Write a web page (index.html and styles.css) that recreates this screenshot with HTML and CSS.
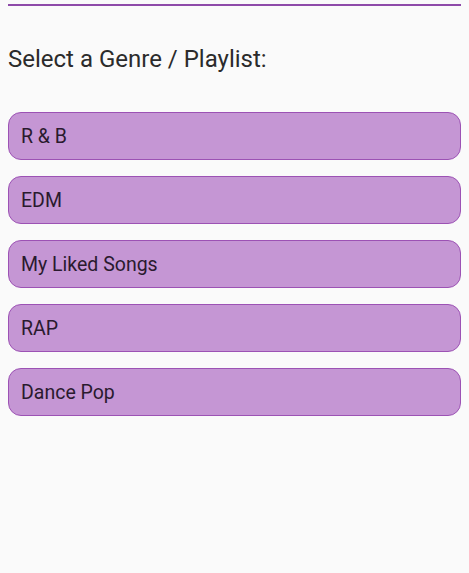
FILE: index.html
```html
<!DOCTYPE html>
<html>
<head>
<meta charset="utf-8">
<link rel="stylesheet" href="styles.css">
</head>
<body>
<div class="page">
  <div class="rule"></div>
  <h1 class="title">Select a Genre / Playlist:</h1>
  <div class="list">
    <button class="item">R &amp; B</button>
    <button class="item">EDM</button>
    <button class="item">My Liked Songs</button>
    <button class="item">RAP</button>
    <button class="item">Dance Pop</button>
  </div>
</div>
</body>
</html>
```
FILE: styles.css
```css
html, body {
  margin: 0;
  padding: 0;
  background: #fafafa;
}
.page {
  width: 469px;
  height: 573px;
  padding: 4px 8px 0;
  box-sizing: border-box;
  font-family: Roboto, "Noto Sans", sans-serif;
}
.rule {
  height: 2px;
  background: #8e4aa9;
}
.title {
  margin: 37px 0 0;
  font-size: 24px;
  font-weight: 400;
  line-height: 32px;
  color: #2b2b2b;
}
.list {
  margin-top: 37px;
  display: flex;
  flex-direction: column;
  gap: 16px;
}
.item {
  height: 48px;
  box-sizing: border-box;
  border: 1px solid #9c52b4;
  border-radius: 13px;
  background: #c596d4;
  text-align: left;
  padding: 0 12px;
  font-family: Roboto, "Noto Sans", sans-serif;
  font-size: 19.5px;
  color: #2a1a2e;
}
```
